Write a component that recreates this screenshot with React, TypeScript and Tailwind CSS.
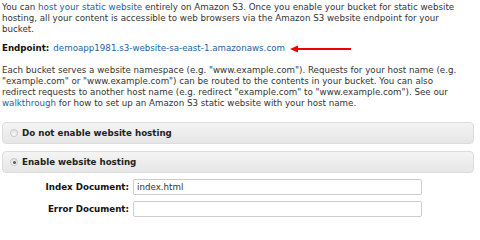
import React from "react";

function Radio({ checked }: { checked?: boolean }) {
  return (
    <span className="flex h-[8px] w-[8px] shrink-0 items-center justify-center rounded-full border border-[#c8c8c8] bg-gradient-to-b from-[#e2e2e2] to-[#fafafa]">
      {checked && <span className="h-[3px] w-[3px] rounded-full bg-[#555]" />}
    </span>
  );
}

function Option({ label, checked }: { label: string; checked?: boolean }) {
  return (
    <div className="flex h-[22px] items-center gap-[4px] rounded-[4px] border border-[#dcdcdc] bg-gradient-to-b from-[#f4f4f4] to-[#e6e6e6] pl-[7px]">
      <Radio checked={checked} />
      <span className="font-bold text-[#222]">{label}</span>
    </div>
  );
}

export default function App() {
  return (
    <div className="h-[219px] w-[480px] overflow-hidden bg-white px-[2px] pt-[2px] font-['DejaVu_Sans',Verdana,sans-serif] text-[8.7px] leading-[11px] text-[#333]">
      <p className="pr-[8px]">
        You can <span className="text-[#1e5fa0]">host your static website</span> entirely on Amazon S3. Once you
        enable your bucket for static website hosting, all your content is accessible to web browsers via the
        Amazon S3 website endpoint for your bucket.
      </p>

      <div className="mt-[8px] flex items-center">
        <span className="font-bold text-[#111]">Endpoint:</span>
        <span className="ml-[4px] text-[#1e5fa0]">demoapp1981.s3-website-sa-east-1.amazonaws.com</span>
        <svg width="62" height="8" viewBox="0 0 62 8" className="ml-[5px]">
          <polygon points="0,4 8,0.5 8,7.5" fill="#e00" />
          <rect x="7" y="3" width="54" height="2" fill="#e00" />
        </svg>
      </div>

      <p className="mt-[11px] pr-[12px]">
        Each bucket serves a website namespace (e.g. "www.example.com"). Requests for your host name (e.g.
        "example.com" or "www.example.com") can be routed to the contents in your bucket. You can also redirect
        requests to another host name (e.g. redirect "example.com" to "www.example.com"). See our{" "}
        <span className="text-[#1e5fa0]">walkthrough</span> for how to set up an Amazon S3 static website with
        your host name.
      </p>

      <div className="mt-[13px] mr-[4px] flex flex-col gap-[7px]">
        <Option label="Do not enable website hosting" />
        <Option label="Enable website hosting" checked />
      </div>

      <div className="mt-[6px] flex flex-col gap-[6px]">
        <div className="flex items-center">
          <span className="w-[131px] pr-[4px] text-right font-bold text-[#111]">Index Document:</span>
          <input
            defaultValue="index.html"
            className="h-[16px] w-[289px] rounded-[2px] border border-[#ccc] px-[3px] text-[8.7px] text-[#333] outline-none"
          />
        </div>
        <div className="flex items-center">
          <span className="w-[131px] pr-[4px] text-right font-bold text-[#111]">Error Document:</span>
          <input className="h-[16px] w-[289px] rounded-[2px] border border-[#ccc] px-[3px] text-[8.7px] outline-none" />
        </div>
      </div>
    </div>
  );
}
